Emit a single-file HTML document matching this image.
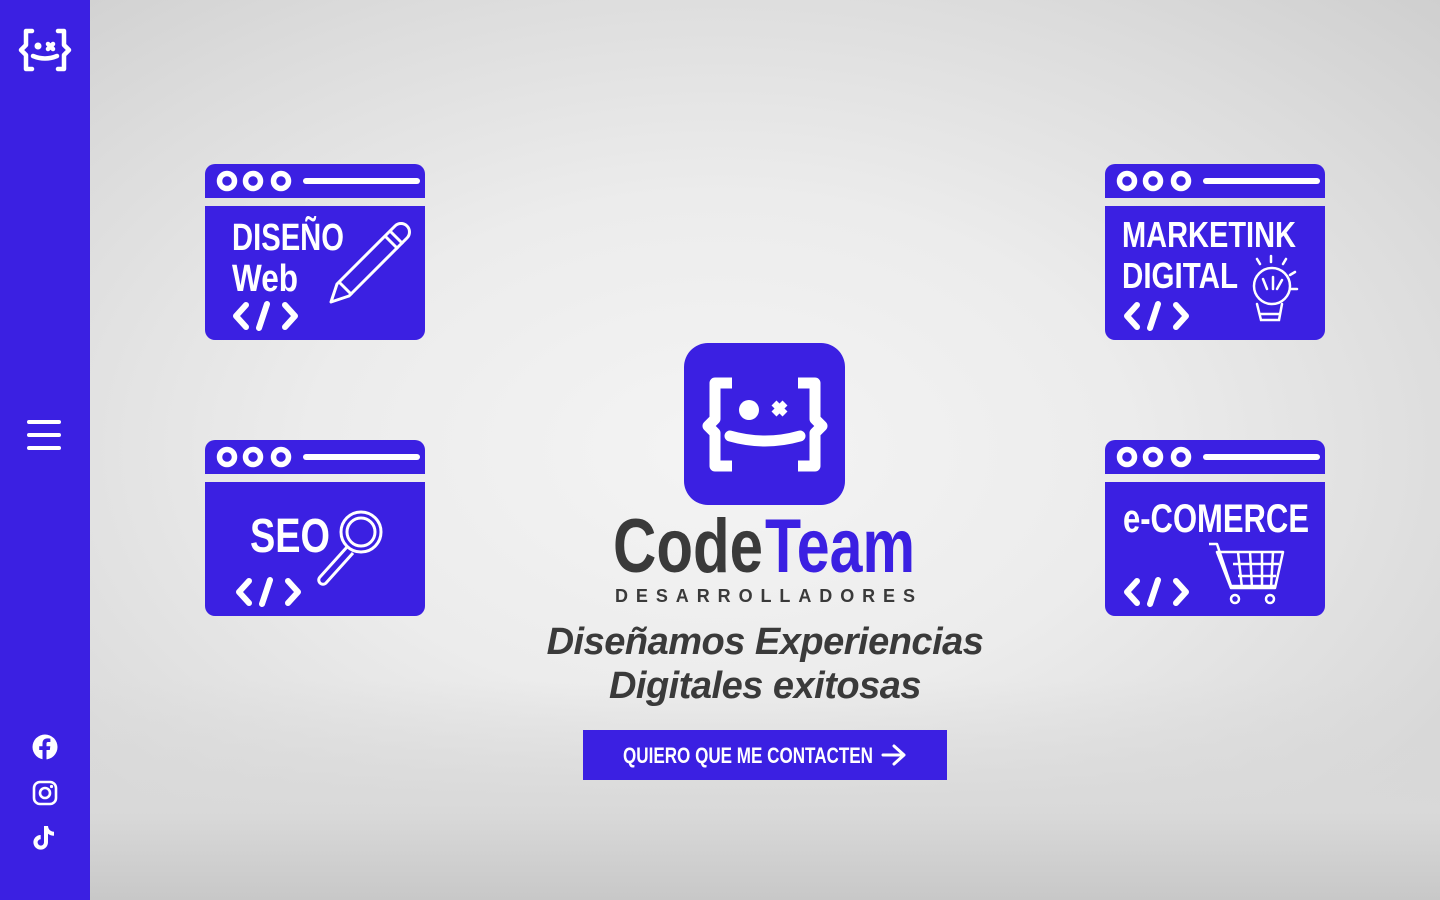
<!DOCTYPE html>
<html><head><meta charset="utf-8"><style>
*{margin:0;padding:0;box-sizing:border-box}
body{width:1440px;height:900px;overflow:hidden;position:relative;font-family:"Liberation Sans",sans-serif;
background:radial-gradient(ellipse at 50% 50%,#f4f4f4 0%,#ececec 40%,#dcdcdc 75%,#cfcfcf 100%);}
.bot{position:absolute;left:90px;right:0;top:680px;bottom:0;background:linear-gradient(#e8e8e800,#d9d9d9 60%,#c8c8c8);}
.side{position:absolute;left:0;top:0;width:90px;height:900px;background:#3b20e2}
.card{position:absolute;width:220px;height:176px}
.t{font-family:"Liberation Sans",sans-serif;font-weight:bold;fill:#fff}
.abs{position:absolute}
</style></head><body>
<div class="bot"></div>
<div class="side">
<svg class="abs" style="left:18px;top:28px" width="54" height="44" viewBox="0 0 54 44"><g fill="none" stroke="#fff" stroke-width="4.5" stroke-linecap="round" stroke-linejoin="round"><path d="M14 3H8v14l-5 5 5 5v14h6"/><path d="M40 3h6v14l5 5-5 5v14h-6"/><path d="M15 28q12 5 24 0"/><path d="M30 16l5 5M35 16l-5 5"/></g><circle cx="20" cy="18" r="3.5" fill="#fff"/></svg>
<svg class="abs" style="left:26px;top:418px" width="36" height="34"><g stroke="#fff" stroke-width="4" stroke-linecap="round"><path d="M3 4h30M3 17h30M3 30h30"/></g></svg>
<svg class="abs" style="left:32px;top:734px" width="26" height="26" viewBox="0 0 26 26"><circle cx="13" cy="13" r="12.5" fill="#fff"/><path d="M14.5 26V16h3.3l.5-3.8h-3.8V9.8c0-1.1.3-1.8 1.9-1.8h2V4.6c-.4 0-1.6-.2-3-.2-2.9 0-4.9 1.8-4.9 5v2.8H7.2V16h3.3v10z" fill="#3b20e2"/></svg>
<svg class="abs" style="left:32px;top:780px" width="26" height="26" viewBox="0 0 26 26"><g fill="none" stroke="#fff" stroke-width="2.6"><rect x="2" y="2" width="22" height="22" rx="6"/><circle cx="13" cy="13" r="5"/></g><circle cx="19.5" cy="6.5" r="1.6" fill="#fff"/></svg>
<svg class="abs" style="left:31px;top:824px" width="26" height="28" viewBox="0 0 26 28"><path d="M13 2h4c.3 3.5 2.6 5.6 6 5.8v4c-2.3 0-4.3-.8-6-2v8.5a7.3 7.3 0 1 1-7.3-7.3v4.2a3.2 3.2 0 1 0 3.3 3.1z" fill="#fff"/></svg>
</div>

<svg class="card" style="left:205px;top:164px" viewBox="0 0 220 176"><g id="frame"><path d="M10 0h200a10 10 0 0 1 10 10v24H0V10A10 10 0 0 1 10 0z" fill="#3b20e2"/><path d="M0 42h220v124a10 10 0 0 1-10 10H10A10 10 0 0 1 0 166z" fill="#3b20e2"/><g fill="none" stroke="#fff" stroke-width="5.5"><circle cx="22" cy="17" r="7.5"/><circle cx="48" cy="17" r="7.5"/><circle cx="76" cy="17" r="7.5"/></g><path d="M101 17h111" stroke="#fff" stroke-width="6" stroke-linecap="round"/></g>
<g fill="none" stroke="#fff" stroke-width="6" stroke-linecap="round" stroke-linejoin="round"><path d="M41 141l-10 11 10 11M80 141l10 11-10 11M62 140l-8 24"/></g>
<text class="t" x="27" y="86" font-size="38" textLength="112" lengthAdjust="spacingAndGlyphs">DISEÑO</text>
<text class="t" x="27" y="127" font-size="38" textLength="66" lengthAdjust="spacingAndGlyphs">Web</text>
<g fill="none" stroke="#fff" stroke-width="3" stroke-linejoin="round"><path d="M132 120l58-58a8 8 0 0 1 12 12l-58 58-18 6z"/><path d="M134 118l13 13M180 72l13 13M185 67l13 13"/></g>
</svg>

<svg class="card" style="left:205px;top:440px" viewBox="0 0 220 176"><use href="#frame"/>
<g fill="none" stroke="#fff" stroke-width="6" stroke-linecap="round" stroke-linejoin="round"><path d="M44 141l-10 11 10 11M83 141l10 11-10 11M65 140l-8 24"/></g>
<text class="t" x="45" y="112" font-size="48" textLength="80" lengthAdjust="spacingAndGlyphs">SEO</text>
<g fill="none" stroke="#fff" stroke-width="3"><circle cx="156" cy="92" r="20"/><circle cx="156" cy="92" r="14"/><path d="M142 107l-27 30a4 4 0 0 0 6 6l27-30"/></g>
</svg>

<svg class="card" style="left:1105px;top:164px" viewBox="0 0 220 176"><use href="#frame"/>
<g fill="none" stroke="#fff" stroke-width="6" stroke-linecap="round" stroke-linejoin="round"><path d="M32 141l-10 11 10 11M71 141l10 11-10 11M53 140l-8 24"/></g>
<text class="t" x="17" y="83" font-size="36" textLength="174" lengthAdjust="spacingAndGlyphs">MARKETINK</text>
<text class="t" x="17" y="124" font-size="36" textLength="116" lengthAdjust="spacingAndGlyphs">DIGITAL</text>
<g fill="none" stroke="#fff" stroke-width="2.5" stroke-linecap="round"><circle cx="167" cy="122" r="18"/><path d="M152 140l4 16h18l3-16M156 150h18M162 125l-4-10M168 125l0-12M172 125l5-9M152 95l3 5M166 92v6M181 95l-3 5M190 108l-5 3M192 125h-6"/></g>
</svg>

<svg class="card" style="left:1105px;top:440px" viewBox="0 0 220 176"><use href="#frame"/>
<g fill="none" stroke="#fff" stroke-width="6" stroke-linecap="round" stroke-linejoin="round"><path d="M32 141l-10 11 10 11M71 141l10 11-10 11M53 140l-8 24"/></g>
<text class="t" x="18" y="92" font-size="40" textLength="186" lengthAdjust="spacingAndGlyphs">e-COMERCE</text>
<g fill="none" stroke="#fff" stroke-width="2.5" stroke-linejoin="round"><path d="M104 104h8l14 42h44"/><path d="M112 112h66l-8 36h-44z"/><path d="M128 124h46M133 136h38M133 112l4 36M145 112l2 36M157 112l0 36M168 112l-2 36"/><circle cx="130" cy="159" r="4"/><circle cx="165" cy="159" r="4"/></g>
</svg>

<svg class="abs" style="left:684px;top:343px" width="161" height="162" viewBox="0 0 161 162"><rect width="161" height="162" rx="24" fill="#3b20e2"/>
<g fill="none" stroke="#fff" stroke-width="11" stroke-linejoin="round"><path d="M48 40H31v36l-7 7 7 7v33h17"/><path d="M114 40h17v36l7 7-7 7v33h-17"/><path d="M46 93q35 10 70 0" stroke-linecap="round"/><path d="M90 60l11 11M101 60l-11 11" stroke-width="7"/></g>
<circle cx="65" cy="67" r="10" fill="#fff"/></svg>
<svg class="abs" style="left:610px;top:505px" width="310" height="100" viewBox="0 0 310 100">
<text x="3" y="67" font-family="Liberation Sans" font-weight="bold" font-size="76" textLength="150" lengthAdjust="spacingAndGlyphs" fill="#3a3a3a">Code</text>
<text x="155" y="67" font-family="Liberation Sans" font-weight="bold" font-size="76" textLength="150" lengthAdjust="spacingAndGlyphs" fill="#3b20e2">Team</text>
<text x="5" y="97" font-family="Liberation Sans" font-weight="bold" font-size="18" textLength="300" lengthAdjust="spacing" fill="#3a3a3a">DESARROLLADORES</text>
</svg>
<div class="abs" style="left:445px;top:620px;width:640px;text-align:center;font-weight:bold;font-style:italic;font-size:38px;line-height:44px;color:#3a3a3a;letter-spacing:-0.5px">Diseñamos Experiencias<br>Digitales exitosas</div>
<div class="abs" style="left:583px;top:730px;width:364px;height:50px;background:#3b20e2;"></div>
<svg class="abs" style="left:583px;top:730px" width="364" height="50"><text x="40" y="33" font-family="Liberation Sans" font-weight="bold" font-size="22" textLength="250" lengthAdjust="spacingAndGlyphs" fill="#fff">QUIERO QUE ME CONTACTEN</text>
<path d="M300 25h21M311 16l10 9-10 9" fill="none" stroke="#fff" stroke-width="3" stroke-linecap="round" stroke-linejoin="round"/></svg>
</body></html>
